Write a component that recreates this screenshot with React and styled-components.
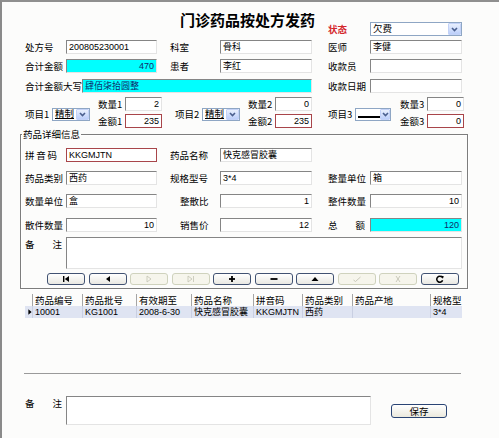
import React from "react";
import styled, { createGlobalStyle } from "styled-components";

const GlobalStyle = createGlobalStyle`
  html, body {
    margin: 0;
    padding: 0;
    background: #fcfcfb;
  }
  body {
    font-family: "Noto Sans CJK SC", "Liberation Sans", sans-serif;
  }
  * {
    box-sizing: border-box;
  }
`;

const Window = styled.div`
  width: 499px;
  height: 438px;
  border-top: 2px solid #8f8f8f;
  border-left: 2px solid #8a8a8a;
  background: #fcfcfb;
  padding-left: 23px;
  overflow: hidden;
  color: #000;
`;

const Header = styled.div`
  display: flex;
  height: 36px;
`;

const Title = styled.h1`
  margin: 8px 0 0 155px;
  width: 138px;
  font-size: 15px;
  font-weight: bold;
  line-height: 20px;
  white-space: nowrap;
`;

const StatusGroup = styled.div`
  display: flex;
  align-items: center;
  margin: 20px 0 0 10px;
  height: 14px;
`;

const Row = styled.div`
  display: flex;
  align-items: ${(p) => p.$align || "center"};
  height: ${(p) => (p.$h ? `${p.$h}px` : "14px")};
  margin-top: ${(p) => p.$mt || 0}px;
`;

const Label = styled.span`
  flex-shrink: 0;
  width: ${(p) => p.$w}px;
  margin-left: ${(p) => p.$ml || 0}px;
  font-size: 9.5px;
  line-height: 14px;
  white-space: nowrap;
  color: ${(p) => (p.$red ? "#d4262b" : "#000")};
  font-weight: ${(p) => (p.$red ? "bold" : "normal")};
`;

const Spread = styled.span`
  flex-shrink: 0;
  display: flex;
  justify-content: space-between;
  width: ${(p) => p.$w}px;
  margin-left: ${(p) => p.$ml || 0}px;
  margin-right: ${(p) => p.$mr || 0}px;
  font-size: 9.5px;
  line-height: 14px;
`;

const Field = styled.div`
  flex-shrink: 0;
  width: ${(p) => p.$w}px;
  height: ${(p) => p.$h || 14}px;
  margin-left: ${(p) => p.$ml || 0}px;
  background: ${(p) => (p.$cyan ? "#00ffff" : "#fff")};
  border: 1px solid;
  border-color: ${(p) =>
    p.$red ? "#a8454a" : "#858585 #e4e4e4 #e4e4e4 #858585"};
  padding: 0 2px;
  font-family: "Liberation Sans", "Noto Sans CJK SC", sans-serif;
  font-size: 9px;
  line-height: 12px;
  text-align: ${(p) => (p.$right ? "right" : "left")};
  color: ${(p) => (p.$cyan ? "#102a6a" : "#000")};
  white-space: nowrap;
  overflow: hidden;
`;

const Combo = styled.div`
  flex-shrink: 0;
  display: flex;
  align-items: center;
  width: ${(p) => p.$w}px;
  height: ${(p) => p.$h || 14}px;
  margin-top: ${(p) => p.$mt || 0}px;
  background: #fff;
  border: 1px solid #8ea6c4;
  padding: 0 0 0 2px;
  font-size: 9.5px;
`;

const ComboText = styled.span`
  flex: 1;
  display: flex;
  align-items: center;
  height: 100%;
  white-space: nowrap;
  line-height: 1;
  text-decoration: ${(p) => (p.$u ? "underline" : "none")};
`;

const EmptyBar = styled.span`
  display: block;
  width: 22px;
  height: 2px;
  margin-top: 5px;
  background: #000;
`;

const DropBtn = styled.span`
  width: 13px;
  height: 100%;
  display: flex;
  align-items: center;
  justify-content: center;
  border: 1px solid #c3d2f7;
  border-radius: 1px;
  background: linear-gradient(#e8effd, #bccffa);
`;

const ItemsRow = styled.div`
  display: flex;
  height: 31px;
  margin-top: 4px;
`;

const ItemGroup = styled.div`
  display: flex;
  align-items: center;
  margin-left: ${(p) => p.$ml || 0}px;
`;

const ItemLabel = styled(Label)`
  margin-top: 3px;
`;

const QtyStack = styled.div`
  display: flex;
  flex-direction: column;
  justify-content: space-between;
  align-self: stretch;
  margin-left: ${(p) => p.$ml || 8}px;
`;

const GroupBox = styled.fieldset`
  margin: 0 0 0 -5px;
  width: 448px;
  border: 1px solid #7d7d7d;
  box-shadow: inset 1px 1px 0 #fff, 1px 1px 0 #fff;
  padding: 0 0 3px 4px;
  min-width: 0;
`;

const Legend = styled.legend`
  font-size: 9.5px;
  line-height: 12px;
  padding: 0 1px;
  margin-left: -3px;
`;

const NavBar = styled.div`
  display: flex;
  justify-content: space-between;
  width: 412px;
  margin: 4px 0 0 22px;
`;

const NavButton = styled.div`
  width: 38px;
  height: 12px;
  display: flex;
  align-items: center;
  justify-content: center;
  border: 1px solid ${(p) => (p.$off ? "#cfd2bd" : "#415272")};
  border-radius: 3px;
  background: ${(p) =>
    p.$off ? "#f6f5ec" : "linear-gradient(#ffffff, #e9e8e2)"};
`;

const Grid = styled.div`
  margin-top: 5px;
  width: 437px;
`;

const GridRow = styled.div`
  display: grid;
  grid-template-columns: 7px 50px 54px 55px 62px 49px 50px 78px 32px;
  height: 12px;
  background: ${(p) => p.$bg || "transparent"};
`;

const Cell = styled.div`
  border-left: 1px solid ${(p) => (p.$line ? p.$line : "transparent")};
  padding-left: 2px;
  font-size: ${(p) => (p.$head ? 9.5 : 9)}px;
  font-family: ${(p) =>
    p.$head
      ? `"Noto Sans CJK SC", sans-serif`
      : `"Liberation Sans", "Noto Sans CJK SC", sans-serif`};
  line-height: 12px;
  white-space: nowrap;
  overflow: hidden;
  display: flex;
  align-items: center;
`;

const Divider = styled.div`
  width: 437px;
  height: 1px;
  margin: 55px 0 0 -1px;
  background: #9a9a9a;
`;

const SaveButton = styled.div`
  width: 56px;
  height: 14px;
  margin: 8px 0 0 20px;
  border: 1px solid #2a4474;
  border-radius: 3px;
  background: linear-gradient(#ffffff, #ebe9dd);
  font-size: 9.5px;
  line-height: 12px;
  text-align: center;
`;

const Chevron = () => (
  <svg width="7" height="5" viewBox="0 0 7 5">
    <polyline
      points="1,1 3.5,3.5 6,1"
      fill="none"
      stroke="#4a5f8e"
      strokeWidth="1.6"
    />
  </svg>
);

const ComboBox = ({ w, h, mt, text, underline, empty }) => (
  <Combo $w={w} $h={h} $mt={mt}>
    {empty ? (
      <ComboText>
        <EmptyBar />
      </ComboText>
    ) : (
      <ComboText $u={underline}>{text}</ComboText>
    )}
    <DropBtn>
      <Chevron />
    </DropBtn>
  </Combo>
);

const GRAY = "#c4c4b4";

const NavIcon = ({ kind }) => {
  const shapes = {
    first: (
      <>
        <rect x="2" y="1" width="1.4" height="6" fill="#000" />
        <polygon points="8,1 8,7 3.8,4" fill="#000" />
      </>
    ),
    prior: <polygon points="7,1 7,7 3,4" fill="#000" />,
    next: (
      <polygon points="3,1 7,4 3,7" fill="none" stroke={GRAY} strokeWidth="0.8" />
    ),
    last: (
      <>
        <polygon points="2,1 6,4 2,7" fill="none" stroke={GRAY} strokeWidth="0.8" />
        <line x1="7.5" y1="1" x2="7.5" y2="7" stroke={GRAY} strokeWidth="0.8" />
      </>
    ),
    plus: (
      <>
        <rect x="2" y="3.1" width="6" height="1.8" fill="#000" />
        <rect x="4.1" y="1" width="1.8" height="6" fill="#000" />
      </>
    ),
    minus: <rect x="1.5" y="3.1" width="7" height="1.8" fill="#000" />,
    up: <polygon points="1.5,6 8.5,6 5,2" fill="#000" />,
    check: (
      <polyline points="1.5,5 3.5,6.5 8.5,2" fill="none" stroke={GRAY} strokeWidth="0.9" />
    ),
    cross: (
      <path d="M3 1 L7 7 M7 1 L3 7" stroke={GRAY} strokeWidth="0.9" fill="none" />
    ),
    refresh: (
      <>
        <path
          d="M7.2 2.4 A3 3 0 1 0 7.6 5.2"
          fill="none"
          stroke="#000"
          strokeWidth="1.5"
        />
        <polygon points="5.6,0.6 8.8,1.2 7.8,3.8" fill="#000" />
      </>
    ),
  };
  return (
    <svg width="10" height="8" viewBox="0 0 10 8">
      {shapes[kind]}
    </svg>
  );
};

const navButtons = [
  ["first", false],
  ["prior", false],
  ["next", true],
  ["last", true],
  ["plus", false],
  ["minus", false],
  ["up", false],
  ["check", true],
  ["cross", true],
  ["refresh", false],
];

const headCells = ["", "药品编号", "药品批号", "有效期至", "药品名称", "拼音码", "药品类别", "药品产地", "规格型"];
const dataCells = ["", "10001", "KG1001", "2008-6-30", "快克感冒胶囊", "KKGMJTN", "西药", "", "3*4"];

const RowMarker = () => (
  <svg width="5" height="8" viewBox="0 0 5 8">
    <polygon points="0.5,0.5 4.5,4 0.5,7.5" fill="#000" />
  </svg>
);

const SpreadLabel = ({ text, w, ml, mr }) => (
  <Spread $w={w} $ml={ml} $mr={mr}>
    {text.split("").map((c, i) => (
      <span key={i}>{c}</span>
    ))}
  </Spread>
);

const items = [
  { n: 1, ml: 0, text: "精制", qty: "2", amt: "235" },
  { n: 2, ml: 13, text: "精制", qty: "0", amt: "235" },
  { n: 3, ml: 16, empty: true, qty: "0", amt: "0" },
];

export default function App() {
  return (
    <>
      <GlobalStyle />
      <Window>
        <Header>
          <Title>门诊药品按处方发药</Title>
          <StatusGroup>
            <Label $w={42} $red>
              状态
            </Label>
            <ComboBox w={92} text="欠费" />
          </StatusGroup>
        </Header>

        <Row $mt={2}>
          <Label $w={41}>处方号</Label>
          <Field $w={91}>200805230001</Field>
          <Label $w={50} $ml={13}>科室</Label>
          <Field $w={92}>骨科</Field>
          <Label $w={42} $ml={16}>医师</Label>
          <Field $w={92}>李健</Field>
        </Row>
        <Row $mt={5}>
          <Label $w={41}>合计金额</Label>
          <Field $w={91} $cyan $right>470</Field>
          <Label $w={50} $ml={13}>患者</Label>
          <Field $w={92}>李红</Field>
          <Label $w={42} $ml={16}>收款员</Label>
          <Field $w={92} />
        </Row>
        <Row $mt={6}>
          <Label $w={57}>合计金额大写</Label>
          <Field $w={230} $cyan>肆佰柒拾圆整</Field>
          <Label $w={42} $ml={16}>收款日期</Label>
          <Field $w={92} />
        </Row>

        <ItemsRow>
          {items.map((it) => (
            <ItemGroup key={it.n} $ml={it.ml}>
              <ItemLabel $w={27}>项目{it.n}</ItemLabel>
              <ComboBox
                w={it.n === 3 ? 36 : 38}
                h={13}
                mt={3}
                text={it.text}
                underline
                empty={it.empty}
              />
              <QtyStack $ml={it.n === 3 ? 9 : 8}>
                <Row>
                  <Label $w={27}>数量{it.n}</Label>
                  <Field $w={37} $right>{it.qty}</Field>
                </Row>
                <Row>
                  <Label $w={27}>金额{it.n}</Label>
                  <Field $w={37} $right $red>{it.amt}</Field>
                </Row>
              </QtyStack>
            </ItemGroup>
          ))}
        </ItemsRow>

        <GroupBox>
          <Legend>药品详细信息</Legend>
          <Row $mt={8}>
            <SpreadLabel text="拼音码" w={32} mr={9} />
            <Field $w={91} $red>KKGMJTN</Field>
            <Label $w={50} $ml={13}>药品名称</Label>
            <Field $w={92}>快克感冒胶囊</Field>
          </Row>
          <Row $mt={9}>
            <Label $w={41}>药品类别</Label>
            <Field $w={91}>西药</Field>
            <Label $w={50} $ml={13}>规格型号</Label>
            <Field $w={92}>3*4</Field>
            <Label $w={42} $ml={16}>整量单位</Label>
            <Field $w={92}>箱</Field>
          </Row>
          <Row $mt={9}>
            <Label $w={41}>数量单位</Label>
            <Field $w={91}>盒</Field>
            <Label $w={40} $ml={23}>整散比</Label>
            <Field $w={92} $right>1</Field>
            <Label $w={42} $ml={16}>整件数量</Label>
            <Field $w={92} $right>10</Field>
          </Row>
          <Row $mt={10}>
            <Label $w={41}>散件数量</Label>
            <Field $w={91} $right>10</Field>
            <Label $w={40} $ml={23}>销售价</Label>
            <Field $w={92} $right>12</Field>
            <SpreadLabel text="总额" w={37} ml={16} mr={5} />
            <Field $w={92} $cyan $right>120</Field>
          </Row>
          <Row $mt={5} $h={32} $align="flex-start">
            <SpreadLabel text="备注" w={37} mr={4} />
            <Field $w={396} $h={32} />
          </Row>
          <NavBar>
            {navButtons.map(([kind, off]) => (
              <NavButton key={kind} $off={off}>
                <NavIcon kind={kind} />
              </NavButton>
            ))}
          </NavBar>
        </GroupBox>

        <Grid>
          <GridRow>
            {headCells.map((h, i) => (
              <Cell key={i} $head $line={i > 0 ? "#a5a5a5" : null}>
                {h}
              </Cell>
            ))}
          </GridRow>
          <GridRow $bg="#dfe4f2">
            {dataCells.map((d, i) => (
              <Cell key={i} $line={i > 0 ? "#c9cfe2" : null}>
                {i === 0 ? <RowMarker /> : d}
              </Cell>
            ))}
          </GridRow>
        </Grid>

        <Divider />

        <Row $mt={22} $h={29} $align="flex-start">
          <SpreadLabel text="备注" w={37} mr={4} />
          <Field $w={305} $h={29} />
          <SaveButton>保存</SaveButton>
        </Row>
      </Window>
    </>
  );
}
